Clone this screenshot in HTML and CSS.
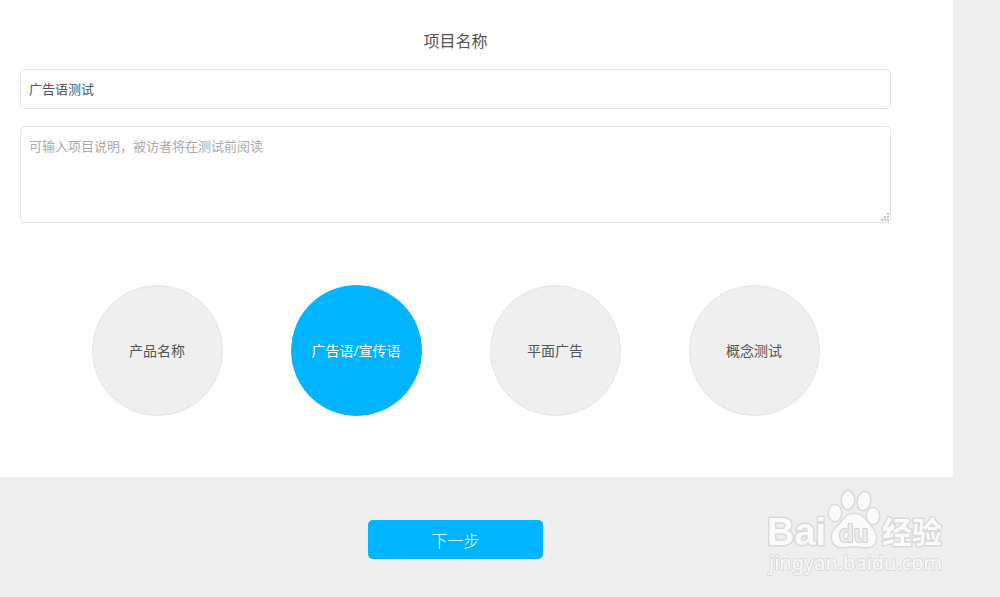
FILE: index.html
```
<!DOCTYPE html>
<html lang="zh-CN">
  <head>
    <meta charset="UTF-8" />
    <meta name="viewport" content="width=device-width, initial-scale=1.0" />
    <title>项目名称</title>
    <link rel="stylesheet" href="styles.css">
  </head>
  <body>
    <form>
      <div class="panel">
        <label class="title" for="projectName">项目名称</label>
        <input class="field" type="text" id="projectName" value="广告语测试" />
        <div class="desc">
          <textarea class="field" aria-label="项目说明" placeholder="可输入项目说明，被访者将在测试前阅读"></textarea>
          <svg class="grip" width="9" height="9" viewBox="0 0 9 9" aria-hidden="true">
            <path d="M6 0h2v2h-2zM3 3h2v2h-2zM6 3h2v2h-2zM0 6h2v2h-2zM3 6h2v2h-2zM6 6h2v2h-2z" />
          </svg>
        </div>

        <div class="types">
          <label class="type"><input type="radio" name="type" /><span>产品名称</span></label>
          <label class="type"><input type="radio" name="type" checked /><span>广告语/宣传语</span></label>
          <label class="type"><input type="radio" name="type" /><span>平面广告</span></label>
          <label class="type"><input type="radio" name="type" /><span>概念测试</span></label>
        </div>
      </div>

      <div class="footer">
        <button class="next" type="button">下一步</button>
      </div>
    </form>

    <svg class="watermark" width="190" height="96" viewBox="0 0 190 96">
      <g class="mark">
        <text class="bai" x="7" y="60">Bai</text>
        <ellipse cx="75" cy="28" rx="6" ry="8" />
        <ellipse cx="88" cy="15" rx="6" ry="9" />
        <ellipse cx="104" cy="16" rx="6" ry="9" transform="rotate(12 104 16)" />
        <ellipse cx="113" cy="31" rx="6" ry="8" />
        <path d="M94 29C87 29 84 34 81 38C77 43 72 45 72 52C72 58 76 62 82 62C87 62 90 61 94 61C98 61 102 62 107 62C113 62 116 58 116 52C116 46 111 42 107 37C104 33 101 29 94 29Z" />
        <text class="du" x="79" y="57">du</text>
        <text class="jy" x="122" y="58">经验</text>
        <text class="url" x="9" y="85">jingyan.baidu.com</text>
      </g>
    </svg>
  </body>
</html>
```
FILE: styles.css
```
* {
  box-sizing: border-box;
  margin: 0;
  padding: 0;
}

body {
  font-family: "Noto Sans", "Noto Sans CJK SC", sans-serif;
  background: #efefef;
  color: #555;
}

.panel {
  margin-right: 47px;
  padding: 29px 62px 61px 20px;
  background: #fff;
}

.title {
  display: block;
  margin-bottom: 16px;
  font-size: 16px;
  line-height: 24px;
  text-align: center;
}

.field {
  display: block;
  width: 100%;
  padding: 0 8px;
  border: 1px solid #e4e4e4;
  border-radius: 5px;
  background: #fff;
  color: #555;
  font-family: inherit;
  font-size: 13px;
  line-height: 20px;
  outline: none;
}

input.field {
  height: 40px;
  padding-bottom: 2px;
}

.desc {
  position: relative;
  margin-top: 17px;
}

textarea.field {
  height: 97px;
  padding-top: 9px;
  resize: vertical;
}

textarea::placeholder {
  color: #aaa;
}

textarea::-webkit-resizer {
  background: transparent;
}

.grip {
  position: absolute;
  right: 1px;
  bottom: 1px;
  fill: #c4c4c4;
  pointer-events: none;
}

.types {
  display: flex;
  justify-content: center;
  gap: 68px;
  margin-top: 62px;
}

.type {
  display: flex;
  align-items: center;
  justify-content: center;
  width: 131px;
  height: 131px;
  border: 1px solid #e4e4e4;
  border-radius: 50%;
  background: #efefef;
  font-size: 14px;
  line-height: 20px;
  cursor: pointer;
}

.type input {
  position: absolute;
  opacity: 0;
}

.type:has(input:checked) {
  border-color: #00b4ff;
  background: #00b4ff;
  color: #fff;
}

.footer {
  display: flex;
  justify-content: center;
  margin-right: 47px;
  padding: 43px 62px 38px 20px;
}

.next {
  width: 175px;
  height: 39px;
  border: none;
  border-radius: 5px;
  background: #00b4ff;
  color: #fff;
  font-family: inherit;
  font-size: 16px;
  font-weight: 300;
  cursor: pointer;
}

.watermark {
  position: fixed;
  right: 50px;
  bottom: 16px;
  pointer-events: none;
}

.mark {
  fill: #fafafa;
  stroke: #dadada;
  stroke-width: 3px;
  stroke-linejoin: round;
  paint-order: stroke;
}

.bai {
  font: bold 38px "Liberation Sans", sans-serif;
}

.du {
  font: bold 24px "Liberation Sans", sans-serif;
  fill: #ececec;
  stroke: #d0d0d0;
  stroke-width: 2px;
}

.jy {
  font: bold 30px "Noto Sans CJK SC", sans-serif;
}

.url {
  font: 20px "Noto Sans", sans-serif;
  stroke-width: 2px;
}
```
